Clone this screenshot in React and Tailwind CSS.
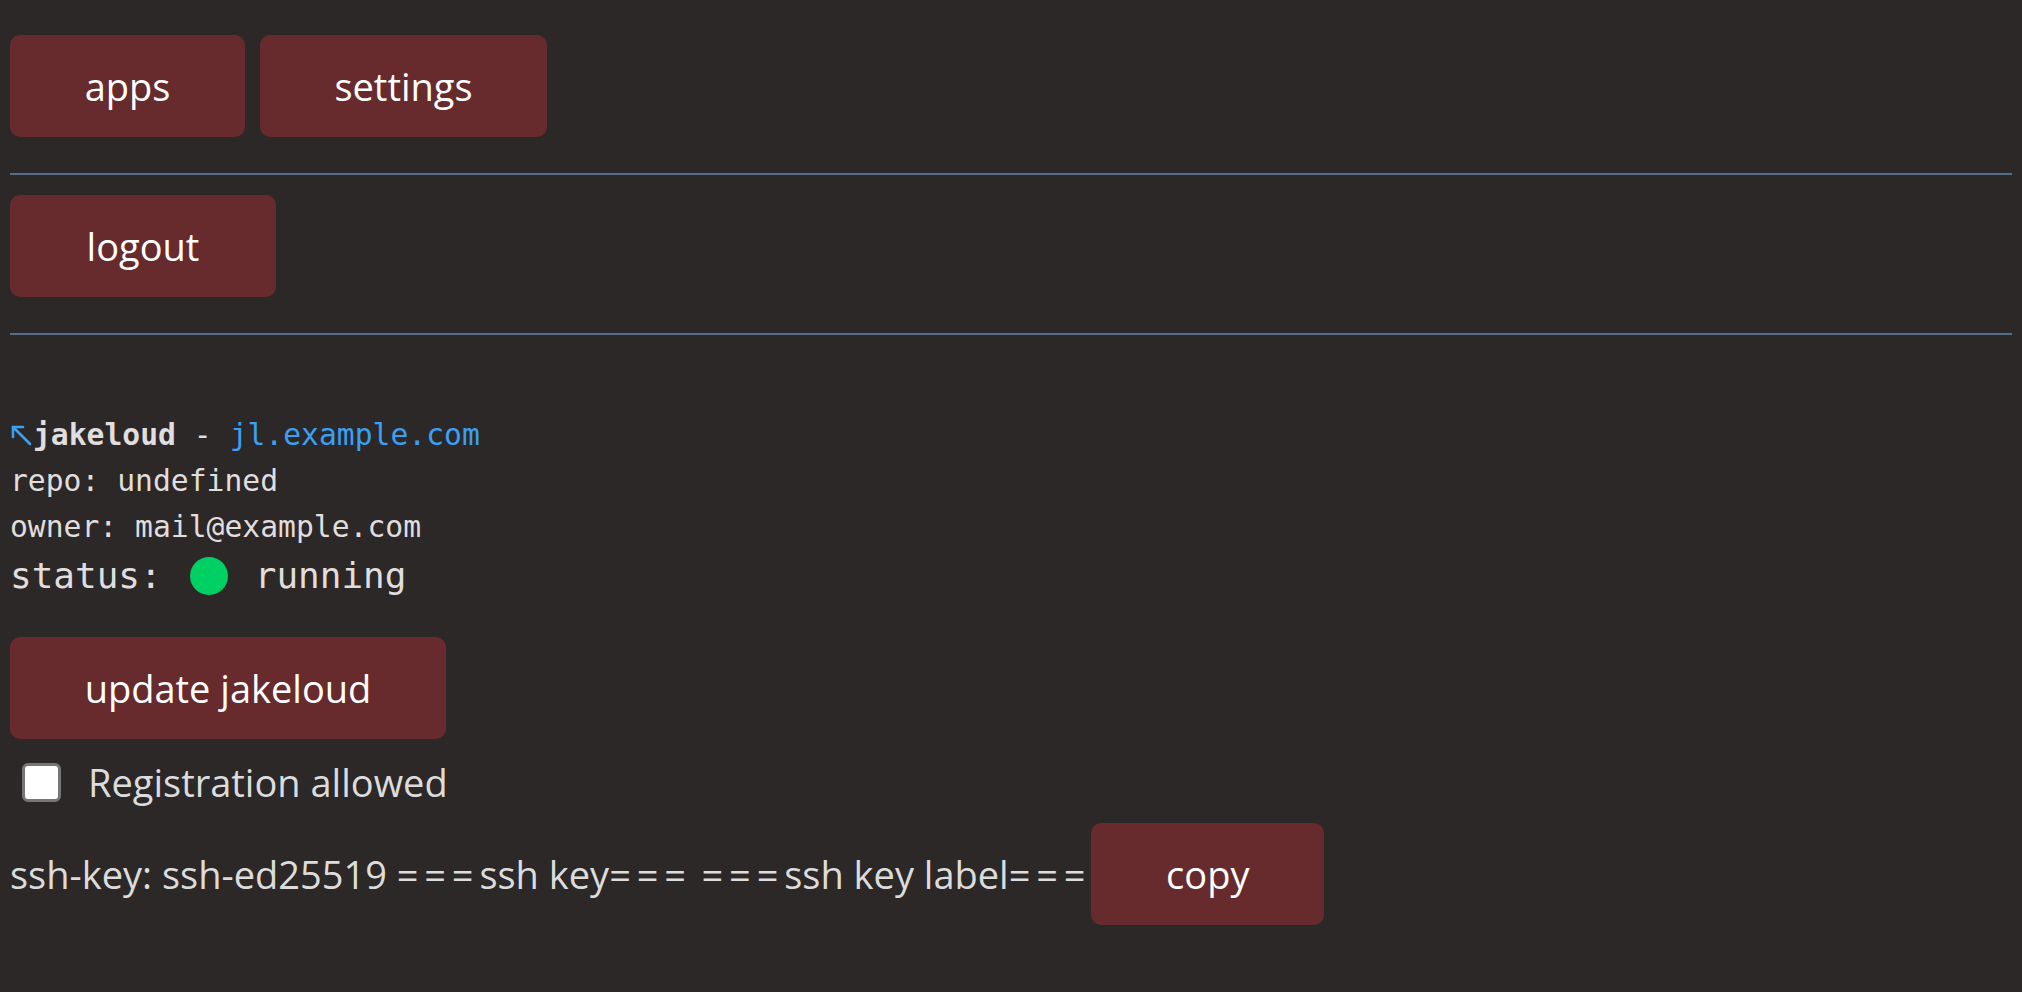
import { useState } from 'react'

const sans = { fontFamily: '"Open Sans", "Noto Sans", sans-serif' }

function Btn({ children, w, onClick }) {
  return (
    <button
      onClick={onClick}
      className={`h-[102px] ${w} shrink-0 rounded-[10px] bg-[#682b2d] text-[38px] text-white flex items-center justify-center font-['Open_Sans',sans-serif]`}
    >
      {children}
    </button>
  )
}

const Eq = () => <span className="tracking-[5.8px]">===</span>

export default function App() {
  const [registration, setRegistration] = useState(false)

  return (
    <div className="min-h-screen bg-[#2c2827] px-[10px] pt-[35px] pb-10 text-[#dcdcdc]" style={sans}>
      {/* Nav */}
      <div className="flex gap-[15px]">
        <Btn w="w-[235px]">apps</Btn>
        <Btn w="w-[287px]">settings</Btn>
      </div>
      <hr className="mt-[36px] mb-[20px] border-0 h-[2px] bg-[#546d88]" />
      <Btn w="w-[266px]">logout</Btn>
      <hr className="mt-[36px] border-0 h-[2px] bg-[#546d88]" />

      {/* App info */}
      <div className="mt-[77px] font-['DejaVu_Sans_Mono',monospace] text-[#e0dede]">
        <div className="text-[29.7px] leading-[46px] flex items-baseline">
          <svg width="23" height="22" viewBox="0 0 23 22" className="shrink-0 self-center" fill="none" stroke="#3aa0f5" strokeWidth="2.6" strokeLinecap="round">
            <path d="M4 4 L20 20" />
            <path d="M3 13 V3 H13" />
          </svg>
          <span className="font-bold">jakeloud</span>
          <span className="whitespace-pre"> - </span>
          <a href="#" className="text-[#3aa0f5]">jl.example.com</a>
        </div>
        <div className="text-[29.7px] leading-[46px]">repo: undefined</div>
        <div className="text-[29.7px] leading-[46px]">owner: mail@example.com</div>
        <div className="flex items-center text-[36px] leading-[52px]">
          <span>status:</span>
          <span className="ml-[28px] w-[38px] h-[38px] rounded-full bg-[#00cf63]" />
          <span className="ml-[27px]">running</span>
        </div>
      </div>

      <div className="mt-[35px]">
        <Btn w="w-[436px]">update jakeloud</Btn>
      </div>

      <label className="mt-[23px] flex items-center gap-[27px] pl-[12px] text-[38px] leading-[40px]">
        <input
          type="checkbox"
          checked={registration}
          onChange={(e) => setRegistration(e.target.checked)}
          className="appearance-none w-[39px] h-[39px] rounded-[6px] border-[3px] border-[#767676] bg-white"
        />
        <span>Registration allowed</span>
      </label>

      <div className="mt-[21px] flex items-center text-[38px]">
        <span>
          ssh-key: ssh-ed25519 <Eq />ssh key<Eq /> <Eq />ssh key label<Eq />
        </span>
        <Btn w="w-[233px]">copy</Btn>
      </div>
    </div>
  )
}
